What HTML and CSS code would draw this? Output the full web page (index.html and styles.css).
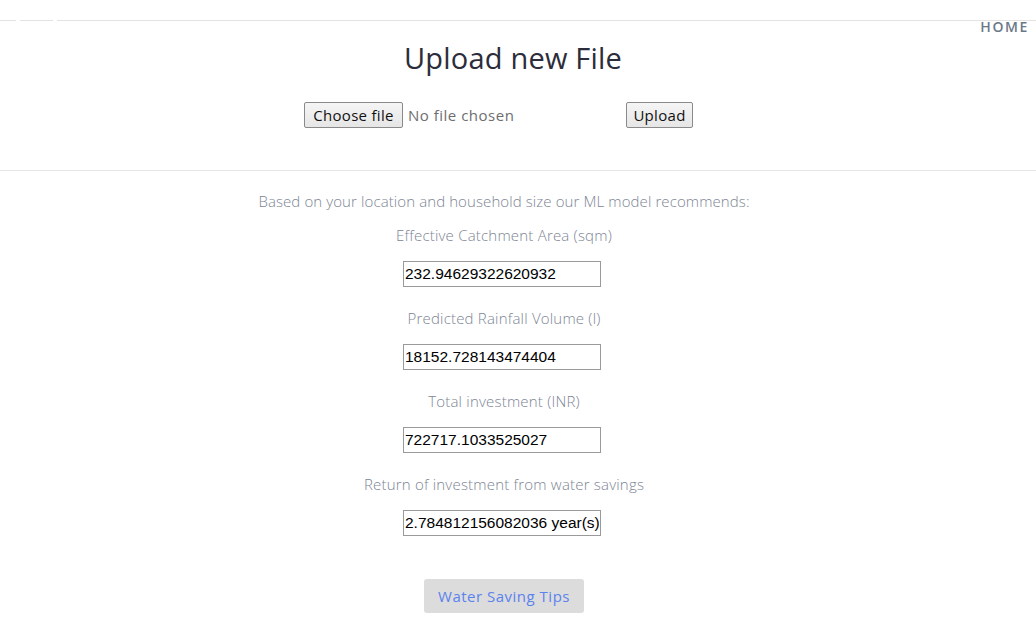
FILE: index.html
```html
<!DOCTYPE html>
<html>
<head>
<meta charset="utf-8">
<link rel="stylesheet" href="styles.css">
</head>
<body>
<header class="topbar">
  <span class="seg seg-a"></span>
  <span class="seg seg-b"></span>
  <span class="seg seg-c"></span>
</header>
<nav class="nav"><a class="nav-link" href="#">HOME</a></nav>
<main>
  <h1 class="title">Upload new File</h1>
  <form class="upload-form">
    <label class="file-picker">
      <span class="btn btn-choose">Choose file</span>
      <span class="file-name">No file chosen</span>
    </label>
    <button type="button" class="btn btn-upload">Upload</button>
  </form>
  <div class="divider"></div>
  <section class="results">
    <p class="intro">Based on your location and household size our ML model recommends:</p>
    <div class="field">
      <span class="label">Effective Catchment Area (sqm)</span>
      <input class="value" type="text" value="232.94629322620932">
    </div>
    <div class="field">
      <span class="label">Predicted Rainfall Volume (l)</span>
      <input class="value" type="text" value="18152.728143474404">
    </div>
    <div class="field">
      <span class="label">Total investment (INR)</span>
      <input class="value" type="text" value="722717.1033525027">
    </div>
    <div class="field">
      <span class="label">Return of investment from water savings</span>
      <input class="value" type="text" value="2.784812156082036 year(s)">
    </div>
    <button type="button" class="tips">Water Saving Tips</button>
  </section>
</main>
</body>
</html>
```
FILE: styles.css
```css
html, body {
  margin: 0;
  padding: 0;
  background: #fff;
}
body {
  font-family: "Open Sans", "DejaVu Sans", sans-serif;
  width: 1036px;
  height: 634px;
  overflow: hidden;
}
.topbar {
  display: flex;
  height: 20px;
}
.seg {
  display: block;
  height: 20px;
  border-bottom: 1px solid #e3e3e3;
}
.seg-a { width: 16px; margin-right: 4px; }
.seg-b { width: 33px; margin-right: 4px; }
.seg-c { flex: 1; }
.nav {
  display: flex;
  justify-content: flex-end;
  height: 14px;
  padding-right: 7px;
}
.nav-link {
  font-size: 14px;
  line-height: 14px;
  font-weight: 600;
  letter-spacing: 1.6px;
  color: #6b7889;
  text-decoration: none;
}
main {
  display: flex;
  flex-direction: column;
}
.title {
  margin: 7px 0 0;
  padding-right: 10px;
  text-align: center;
  font-size: 29px;
  line-height: 34px;
  font-weight: 500;
  letter-spacing: 0.2px;
  color: #2b2d3a;
}
.upload-form {
  display: flex;
  justify-content: center;
  align-items: center;
  margin-top: 27px;
  padding-right: 39px;
  height: 26px;
}
.file-picker {
  display: flex;
  align-items: center;
  width: 322px;
}
.btn {
  box-sizing: border-box;
  height: 26px;
  display: inline-flex;
  align-items: center;
  justify-content: center;
  padding: 0;
  font-family: "Open Sans", sans-serif;
  font-size: 15px;
  letter-spacing: 0.3px;
  color: #111;
  background: linear-gradient(#f5f5f5, #e6e6e6);
  border: 1px solid #8a8a8a;
  border-radius: 2px;
}
.btn-choose { width: 99px; }
.btn-upload { width: 67px; }
.file-name {
  margin-left: 5px;
  font-size: 15px;
  letter-spacing: 0.5px;
  color: #6e6e6e;
}
.divider {
  margin-top: 42px;
  height: 1px;
  background: #e6e6e6;
}
.results {
  display: flex;
  flex-direction: column;
  align-items: center;
  padding-right: 28px;
}
.intro {
  margin: 20px 0 0;
  font-size: 15px;
  line-height: 20px;
  font-weight: 300;
  letter-spacing: 0.1px;
  color: #7d8594;
}
.field {
  display: flex;
  flex-direction: column;
  align-items: center;
}
.field:first-of-type .label { margin-top: 14px; }
.label {
  margin-top: 21px;
  font-size: 15px;
  line-height: 20px;
  font-weight: 300;
  letter-spacing: 0.2px;
  color: #7d8594;
}
.value {
  box-sizing: border-box;
  margin-top: 16px;
  margin-right: 4px;
  width: 198px;
  height: 26px;
  padding: 0 1px;
  border: 1px solid #9a9a9a;
  border-radius: 0;
  font-family: "Liberation Sans", Arial, sans-serif;
  font-size: 15.5px;
  color: #000;
  outline: none;
}
.tips {
  margin-top: 43px;
  width: 160px;
  height: 34px;
  border: none;
  border-radius: 3px;
  background: #dcdcdc;
  color: #5b82ee;
  font-family: "Open Sans", sans-serif;
  font-size: 15px;
  letter-spacing: 0.5px;
}
```
